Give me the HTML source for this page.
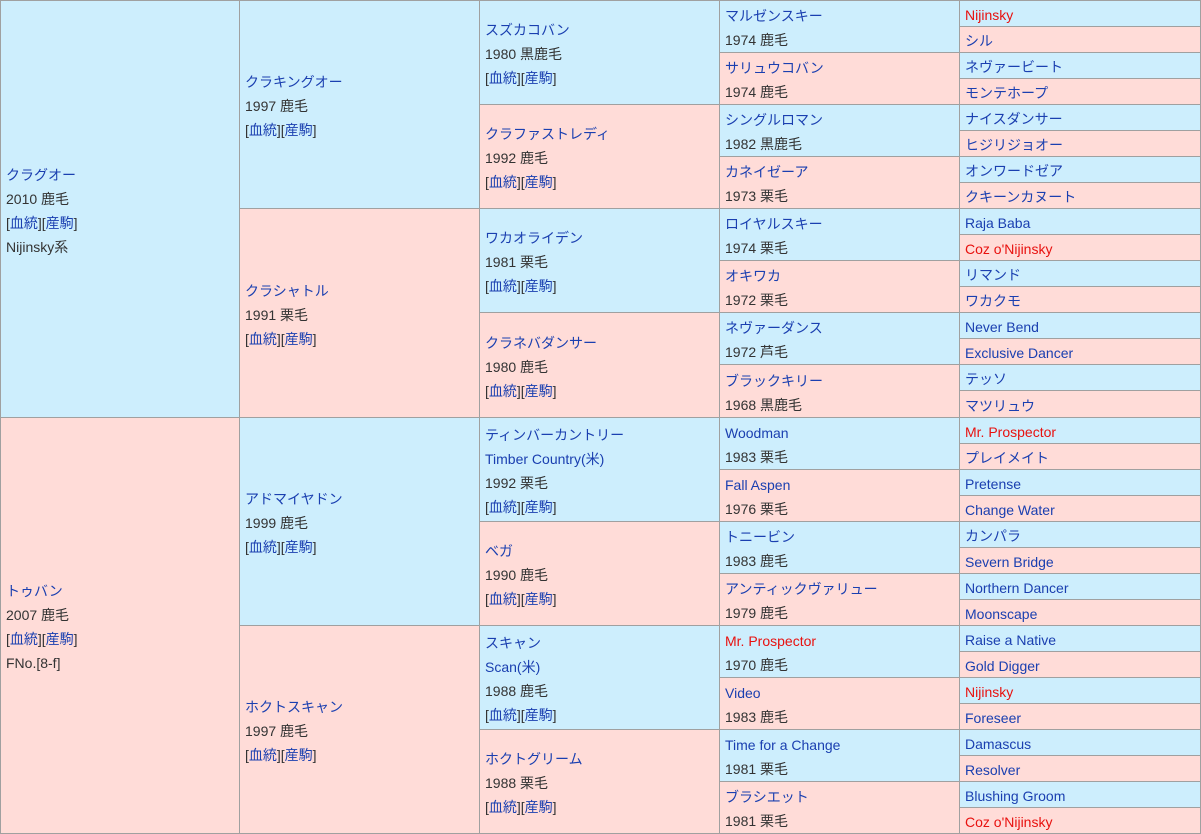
<!DOCTYPE html><html><head><meta charset="utf-8"><style>
body{margin:0;width:1201px;height:834px;background:#fff;font-family:"Liberation Sans","Noto Sans CJK JP",sans-serif;font-size:14px;color:#333;overflow:hidden}
.c{position:absolute;box-sizing:border-box;border:1px solid #a0a0a0;display:flex;flex-direction:column;justify-content:center;padding-left:5px;padding-top:3px;line-height:24px;white-space:nowrap}
.b{background:#cdeefd}.p{background:#ffdcd8}
a{color:#1a3fb0;text-decoration:none}.r{color:#e8110f}
.g5{font-size:14px}
</style></head><body>
<div class="c b" style="left:0;top:0;width:240px;height:418px"><a>クラグオー</a><span>2010 鹿毛</span><span>[<a>血統</a>][<a>産駒</a>]</span><span>Nijinsky系</span></div>
<div class="c p" style="left:0;top:417px;width:240px;height:417px"><a>トゥバン</a><span>2007 鹿毛</span><span>[<a>血統</a>][<a>産駒</a>]</span><span>FNo.[8-f]</span></div>

<div class="c b" style="left:239px;top:0;width:241px;height:209px"><a>クラキングオー</a><span>1997 鹿毛</span><span>[<a>血統</a>][<a>産駒</a>]</span></div>
<div class="c p" style="left:239px;top:208px;width:241px;height:210px"><a>クラシャトル</a><span>1991 栗毛</span><span>[<a>血統</a>][<a>産駒</a>]</span></div>
<div class="c b" style="left:239px;top:417px;width:241px;height:209px"><a>アドマイヤドン</a><span>1999 鹿毛</span><span>[<a>血統</a>][<a>産駒</a>]</span></div>
<div class="c p" style="left:239px;top:625px;width:241px;height:209px"><a>ホクトスキャン</a><span>1997 鹿毛</span><span>[<a>血統</a>][<a>産駒</a>]</span></div>

<div class="c b" style="left:479px;top:0;width:241px;height:105px"><a>スズカコバン</a><span>1980 黒鹿毛</span><span>[<a>血統</a>][<a>産駒</a>]</span></div>
<div class="c p" style="left:479px;top:104px;width:241px;height:105px"><a>クラファストレディ</a><span>1992 鹿毛</span><span>[<a>血統</a>][<a>産駒</a>]</span></div>
<div class="c b" style="left:479px;top:208px;width:241px;height:105px"><a>ワカオライデン</a><span>1981 栗毛</span><span>[<a>血統</a>][<a>産駒</a>]</span></div>
<div class="c p" style="left:479px;top:312px;width:241px;height:106px"><a>クラネバダンサー</a><span>1980 鹿毛</span><span>[<a>血統</a>][<a>産駒</a>]</span></div>
<div class="c b" style="left:479px;top:417px;width:241px;height:105px"><a>ティンバーカントリー</a><a>Timber Country(米)</a><span>1992 栗毛</span><span>[<a>血統</a>][<a>産駒</a>]</span></div>
<div class="c p" style="left:479px;top:521px;width:241px;height:105px"><a>ベガ</a><span>1990 鹿毛</span><span>[<a>血統</a>][<a>産駒</a>]</span></div>
<div class="c b" style="left:479px;top:625px;width:241px;height:105px"><a>スキャン</a><a>Scan(米)</a><span>1988 鹿毛</span><span>[<a>血統</a>][<a>産駒</a>]</span></div>
<div class="c p" style="left:479px;top:729px;width:241px;height:105px"><a>ホクトグリーム</a><span>1988 栗毛</span><span>[<a>血統</a>][<a>産駒</a>]</span></div>

<div class="c b" style="left:719px;top:0;width:241px;height:53px"><a>マルゼンスキー</a><span>1974 鹿毛</span></div>
<div class="c p" style="left:719px;top:52px;width:241px;height:53px"><a>サリュウコバン</a><span>1974 鹿毛</span></div>
<div class="c b" style="left:719px;top:104px;width:241px;height:53px"><a>シングルロマン</a><span>1982 黒鹿毛</span></div>
<div class="c p" style="left:719px;top:156px;width:241px;height:53px"><a>カネイゼーア</a><span>1973 栗毛</span></div>
<div class="c b" style="left:719px;top:208px;width:241px;height:53px"><a>ロイヤルスキー</a><span>1974 栗毛</span></div>
<div class="c p" style="left:719px;top:260px;width:241px;height:53px"><a>オキワカ</a><span>1972 栗毛</span></div>
<div class="c b" style="left:719px;top:312px;width:241px;height:53px"><a>ネヴァーダンス</a><span>1972 芦毛</span></div>
<div class="c p" style="left:719px;top:364px;width:241px;height:54px"><a>ブラックキリー</a><span>1968 黒鹿毛</span></div>
<div class="c b" style="left:719px;top:417px;width:241px;height:53px"><a>Woodman</a><span>1983 栗毛</span></div>
<div class="c p" style="left:719px;top:469px;width:241px;height:53px"><a>Fall Aspen</a><span>1976 栗毛</span></div>
<div class="c b" style="left:719px;top:521px;width:241px;height:53px"><a>トニービン</a><span>1983 鹿毛</span></div>
<div class="c p" style="left:719px;top:573px;width:241px;height:53px"><a>アンティックヴァリュー</a><span>1979 鹿毛</span></div>
<div class="c b" style="left:719px;top:625px;width:241px;height:53px"><a class="r">Mr. Prospector</a><span>1970 鹿毛</span></div>
<div class="c p" style="left:719px;top:677px;width:241px;height:53px"><a>Video</a><span>1983 鹿毛</span></div>
<div class="c b" style="left:719px;top:729px;width:241px;height:53px"><a>Time for a Change</a><span>1981 栗毛</span></div>
<div class="c p" style="left:719px;top:781px;width:241px;height:53px"><a>ブラシエット</a><span>1981 栗毛</span></div>

<div class="c g5 b" style="left:959px;top:0;width:242px;height:27px"><a class="r">Nijinsky</a></div>
<div class="c g5 p" style="left:959px;top:26px;width:242px;height:27px"><a>シル</a></div>
<div class="c g5 b" style="left:959px;top:52px;width:242px;height:27px"><a>ネヴァービート</a></div>
<div class="c g5 p" style="left:959px;top:78px;width:242px;height:27px"><a>モンテホープ</a></div>
<div class="c g5 b" style="left:959px;top:104px;width:242px;height:27px"><a>ナイスダンサー</a></div>
<div class="c g5 p" style="left:959px;top:130px;width:242px;height:27px"><a>ヒジリジョオー</a></div>
<div class="c g5 b" style="left:959px;top:156px;width:242px;height:27px"><a>オンワードゼア</a></div>
<div class="c g5 p" style="left:959px;top:182px;width:242px;height:27px"><a>クキーンカヌート</a></div>
<div class="c g5 b" style="left:959px;top:208px;width:242px;height:27px"><a>Raja Baba</a></div>
<div class="c g5 p" style="left:959px;top:234px;width:242px;height:27px"><a class="r">Coz o'Nijinsky</a></div>
<div class="c g5 b" style="left:959px;top:260px;width:242px;height:27px"><a>リマンド</a></div>
<div class="c g5 p" style="left:959px;top:286px;width:242px;height:27px"><a>ワカクモ</a></div>
<div class="c g5 b" style="left:959px;top:312px;width:242px;height:27px"><a>Never Bend</a></div>
<div class="c g5 p" style="left:959px;top:338px;width:242px;height:27px"><a>Exclusive Dancer</a></div>
<div class="c g5 b" style="left:959px;top:364px;width:242px;height:27px"><a>テッソ</a></div>
<div class="c g5 p" style="left:959px;top:390px;width:242px;height:28px"><a>マツリュウ</a></div>
<div class="c g5 b" style="left:959px;top:417px;width:242px;height:27px"><a class="r">Mr. Prospector</a></div>
<div class="c g5 p" style="left:959px;top:443px;width:242px;height:27px"><a>プレイメイト</a></div>
<div class="c g5 b" style="left:959px;top:469px;width:242px;height:27px"><a>Pretense</a></div>
<div class="c g5 p" style="left:959px;top:495px;width:242px;height:27px"><a>Change Water</a></div>
<div class="c g5 b" style="left:959px;top:521px;width:242px;height:27px"><a>カンパラ</a></div>
<div class="c g5 p" style="left:959px;top:547px;width:242px;height:27px"><a>Severn Bridge</a></div>
<div class="c g5 b" style="left:959px;top:573px;width:242px;height:27px"><a>Northern Dancer</a></div>
<div class="c g5 p" style="left:959px;top:599px;width:242px;height:27px"><a>Moonscape</a></div>
<div class="c g5 b" style="left:959px;top:625px;width:242px;height:27px"><a>Raise a Native</a></div>
<div class="c g5 p" style="left:959px;top:651px;width:242px;height:27px"><a>Gold Digger</a></div>
<div class="c g5 b" style="left:959px;top:677px;width:242px;height:27px"><a class="r">Nijinsky</a></div>
<div class="c g5 p" style="left:959px;top:703px;width:242px;height:27px"><a>Foreseer</a></div>
<div class="c g5 b" style="left:959px;top:729px;width:242px;height:27px"><a>Damascus</a></div>
<div class="c g5 p" style="left:959px;top:755px;width:242px;height:27px"><a>Resolver</a></div>
<div class="c g5 b" style="left:959px;top:781px;width:242px;height:27px"><a>Blushing Groom</a></div>
<div class="c g5 p" style="left:959px;top:807px;width:242px;height:27px"><a class="r">Coz o'Nijinsky</a></div>
</body></html>
